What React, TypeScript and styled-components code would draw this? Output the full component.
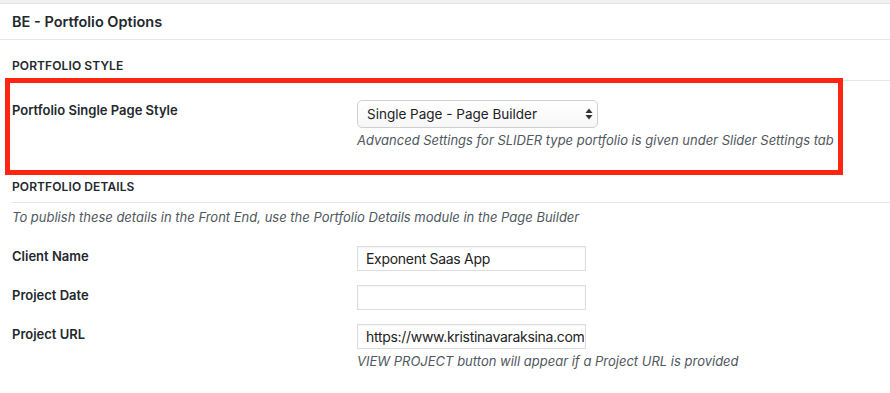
import styled, { createGlobalStyle } from "styled-components";

const GlobalStyle = createGlobalStyle`
	html, body {
		margin: 0;
		padding: 0;
		background: #fff;
	}
	body {
		font-family: Inter, "Noto Sans", "Liberation Sans", sans-serif;
		color: #23282d;
	}
`;

const Page = styled.div`
	width: 890px;
	height: 393px;
	overflow: hidden;
	background: #fff;
`;

const TopStrip = styled.div`
	height: 3px;
	background: #f1f1f1;
	border-bottom: 1px solid #e2e4e7;
`;

const BoxHeader = styled.h2`
	margin: 0;
	height: 35px;
	padding: 0 12px;
	display: flex;
	align-items: center;
	font-size: 14.5px;
	font-weight: 600;
	border-bottom: 1px solid #e5e5e5;
`;

const SectionTitle = styled.h3<{ $gap: number; $pad: number }>`
	margin: ${(p) => p.$gap}px 0 0 12px;
	padding-bottom: ${(p) => p.$pad}px;
	font-size: 12px;
	font-weight: 600;
	letter-spacing: 0.1px;
	border-bottom: 1px solid #e5e5e5;
	line-height: 16px;
`;

const Highlight = styled.div`
	position: relative;
	margin: -3px 0 0 5px;
	width: 826px;
	border: 5px solid #fe2612;
	padding: 18px 0 0 2px;
	height: 69px;
`;

const Row = styled.div<{ $top: number }>`
	display: grid;
	grid-template-columns: 345px 1fr;
	padding-left: 12px;
	margin-top: ${(p) => p.$top}px;
`;

const HighlightRow = styled.div`
	display: grid;
	grid-template-columns: 345px 1fr;
`;

const Label = styled.div<{ $pad: number }>`
	font-size: 13px;
	font-weight: 600;
	line-height: 18px;
	padding-top: ${(p) => p.$pad}px;
`;

const Field = styled.div<{ $lift?: number }>`
	display: flex;
	flex-direction: column;
	margin-top: ${(p) => -(p.$lift ?? 0)}px;
`;

const SelectBox = styled.div`
	width: 241px;
	height: 28px;
	box-sizing: border-box;
	border: 1px solid #cfcfcf;
	border-radius: 5px;
	background: linear-gradient(#ffffff, #f7f7f7);
	display: flex;
	align-items: center;
	justify-content: space-between;
	padding: 0 4px 0 9px;
	font-size: 13.5px;
	color: #222;
`;

const TextInput = styled.input`
	width: 229px;
	height: 25px;
	box-sizing: border-box;
	border: 1px solid #ddd;
	box-shadow: inset 0 1px 2px rgba(0, 0, 0, 0.05);
	padding: 0 1px 0 8px;
	font-family: Inter, "Noto Sans", "Liberation Sans", sans-serif;
	font-size: 14px;
	letter-spacing: -0.3px;
	color: #222;
	background: #fff;
	outline: none;
	margin: 0;
`;

const Hint = styled.p`
	margin: 4px 0 0;
	font-size: 13px;
	font-style: italic;
	color: #50575e;
	line-height: 16px;
	white-space: nowrap;
`;

const Intro = styled.p`
	margin: 6px 0 0 12px;
	font-size: 13px;
	font-style: italic;
	color: #50575e;
	line-height: 16px;
`;

function UpDown() {
	return (
		<svg width="8" height="12" viewBox="0 0 8 12">
			<path d="M4 0.5 L7.5 5 H0.5 Z" fill="#333" />
			<path d="M4 11.5 L7.5 7 H0.5 Z" fill="#333" />
		</svg>
	);
}

const details = [
	{ label: "Client Name", value: "Exponent Saas App", top: 21 },
	{ label: "Project Date", value: "", top: 14 },
	{ label: "Project URL", value: "https://www.kristinavaraksina.com", top: 14 },
];

export default function App() {
	return (
		<Page>
			<GlobalStyle />
			<TopStrip />
			<BoxHeader>BE - Portfolio Options</BoxHeader>
			<SectionTitle $gap={18} $pad={6}>PORTFOLIO STYLE</SectionTitle>
			<Highlight>
				<HighlightRow>
					<Label $pad={0}>Portfolio Single Page Style</Label>
					<Field $lift={1}>
						<SelectBox>
							<span>Single Page - Page Builder</span>
							<UpDown />
						</SelectBox>
						<Hint>Advanced Settings for SLIDER type portfolio is given under Slider Settings tab</Hint>
					</Field>
				</HighlightRow>
			</Highlight>
			<SectionTitle $gap={4} $pad={7}>PORTFOLIO DETAILS</SectionTitle>
			<Intro>To publish these details in the Front End, use the Portfolio Details module in the Page Builder</Intro>
			{details.map((d) => (
				<Row key={d.label} $top={d.top}>
					<Label $pad={1}>{d.label}</Label>
					<Field>
						<TextInput readOnly value={d.value} />
						{d.label === "Project URL" && (
							<Hint>VIEW PROJECT button will appear if a Project URL is provided</Hint>
						)}
					</Field>
				</Row>
			))}
		</Page>
	);
}
